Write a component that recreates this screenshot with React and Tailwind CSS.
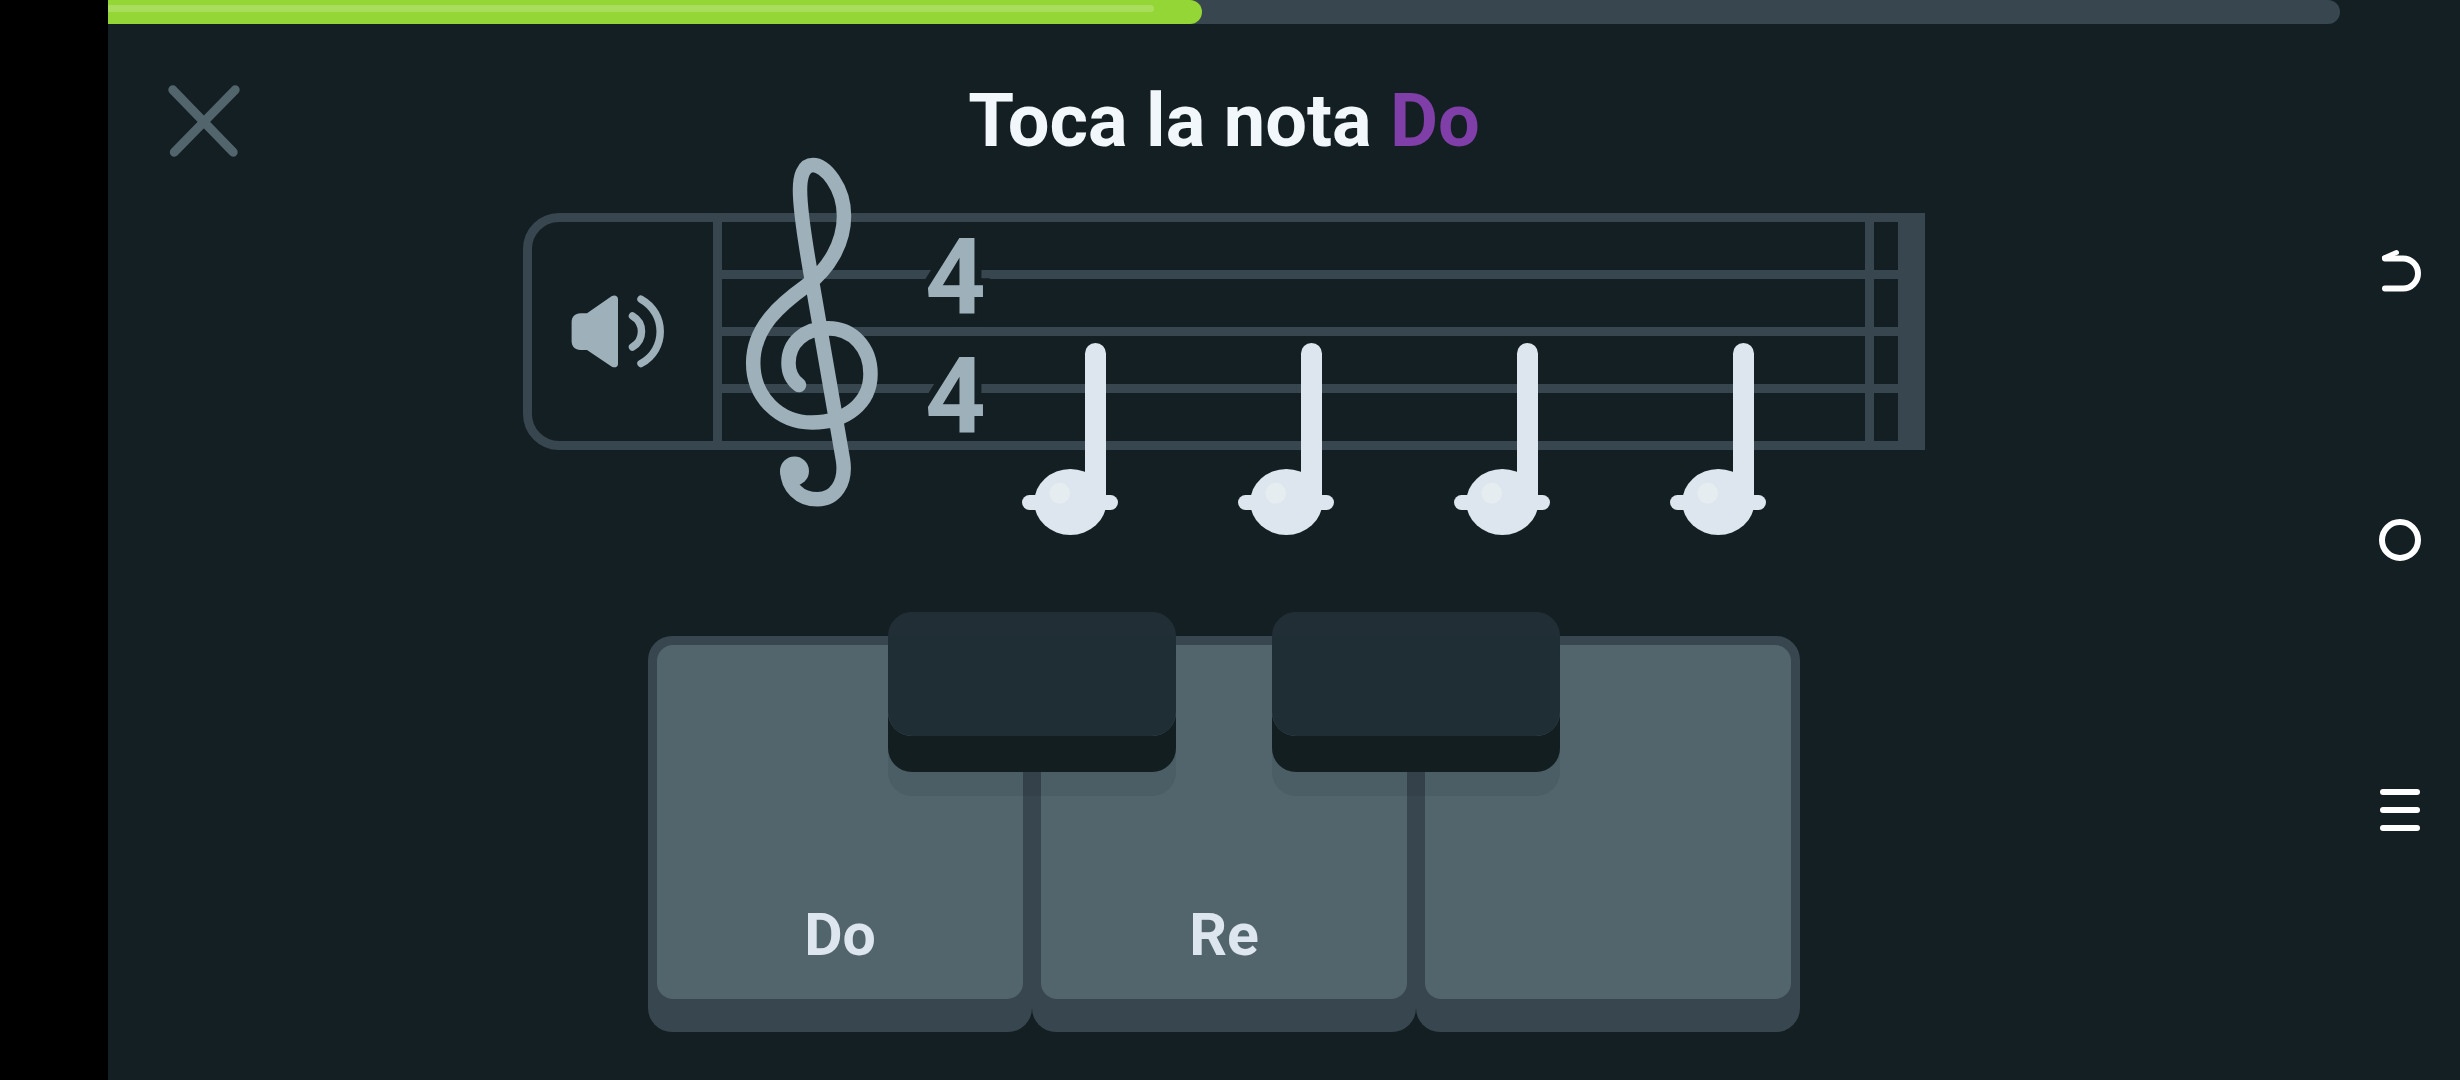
import React, { useState } from 'react';

const progress = 49;
const notes = ['Do', 'Do', 'Do', 'Do'];
const keys = [
  { note: 'Do', label: 'Do' },
  { note: 'Re', label: 'Re' },
  { note: 'Mi', label: '' },
];
const blackKeys = ['Do sostenido', 'Re sostenido'];

const CloseIcon = () => (
  <svg viewBox="0 0 72 72" className="size-[72px]" fill="none" stroke="currentColor" strokeWidth="9" strokeLinecap="round">
    <path d="M4.8 4.8 L65.2 67.2 M67.2 4.8 L6.3 67.2" />
  </svg>
);

const SpeakerIcon = () => (
  <svg viewBox="0 0 94 73" className="w-[94px] h-[73px]" fill="currentColor">
    <path d="M9.5 18.3 H16 L40.5 1.3 C43.5 -0.3 47 0.8 47 4 V69 C47 72.2 43.5 73.3 40.5 71.5 L16 55 H9.5 C4 55 0.6 51.5 0.6 46 V27.3 C0.6 21.8 4 18.3 9.5 18.3 Z" />
    <path
      d="M61.5 21 C67.5 24.5 70.5 30.5 70.5 36.5 C70.5 42.5 67.5 48.5 61.5 52 M70 4.2 C83 11.5 89.2 24 89.2 36.5 C89.2 49 83 61.5 70 68.5"
      fill="none"
      stroke="currentColor"
      strokeWidth="7.5"
      strokeLinecap="round"
    />
  </svg>
);

const TrebleClef = () => (
  <svg viewBox="0 0 134 350" className="shrink-0 w-[134px] h-[350px] text-[#9eb0ba]" fill="none">
    <path
      d="M54 228 C47 223 43.5 215 43.5 206 C43.5 186 59 171.3 83 171.3 C108 171.3 125.5 191 125.5 217 C125.5 246 101 265.5 67 265.5 C34 265.5 8.2 240 8.2 206 C8.2 170 36 147 61 129 C84 112 99 86 99 59 C99 30 80 8 68 8 C58 8 55 20 55 33 C55 60 64 106 68 130 L98 303 C101.5 326 90 342.3 72.5 342.3 C54 342.3 42.5 329 42.5 314"
      stroke="currentColor"
      strokeWidth="14.5"
      strokeLinecap="round"
    />
    <circle cx="49.5" cy="314" r="14.5" fill="currentColor" />
  </svg>
);

const QuarterNote = () => (
  <svg viewBox="0 0 96 192" className="shrink-0 w-24 h-48 text-[#dde6ee]" fill="currentColor">
    <path d="M63 155 V10.5 A10.5 10.5 0 0 1 84 10.5 V155 Z" />
    <rect x="0" y="152" width="96" height="15" rx="7.5" />
    <ellipse cx="48.3" cy="159" rx="36" ry="33" />
    <circle cx="37.7" cy="150.3" r="10.5" fill="#e5edf0" />
  </svg>
);

const BackIcon = () => (
  <svg viewBox="0 0 42 44" className="w-[42px] h-11" fill="none" stroke="currentColor" strokeWidth="6" strokeLinecap="round">
    <path d="M6 10.5 H24 A15 15 0 0 1 24 40.5 H6" />
    <path d="M5.5 9.8 L17.5 4.5" strokeWidth="5" />
  </svg>
);

const HomeIcon = () => (
  <svg viewBox="0 0 42 42" className="size-[42px]" fill="none" stroke="currentColor" strokeWidth="6">
    <circle cx="21" cy="21" r="18" />
  </svg>
);

const MenuIcon = () => (
  <svg viewBox="0 0 42 42" className="size-[42px]" stroke="currentColor" strokeWidth="6" strokeLinecap="round">
    <path d="M4 3 H38 M4 21 H38 M4 39 H38" />
  </svg>
);

const ProgressBar = ({ value }) => (
  <div className="h-6 rounded-r-full bg-[#38464f]" role="progressbar" aria-valuenow={value} aria-valuemin={0} aria-valuemax={100}>
    <div className="h-full pt-[5px] pr-12 rounded-r-full bg-[#93d635]" style={{ width: `${value}%` }}>
      <div className="h-[7px] rounded-r-full bg-[#a9de5c]" />
    </div>
  </div>
);

const Staff = () => (
  <section className="flex w-full max-w-[1402px] h-[237px]">
    <button aria-label="Escuchar" className="flex items-center justify-center w-[199px] shrink-0 pr-[10px] border-9 border-[#38464f] rounded-l-[36px] text-[#9eb0ba]">
      <SpeakerIcon />
    </button>
    <div className="grid flex-1">
      <div className="[grid-area:1/1] flex flex-col justify-between">
        {[0, 1, 2, 3, 4].map((line) => (
          <div key={line} className="h-[9px] bg-[#38464f]" />
        ))}
      </div>
      <div className="[grid-area:1/1] z-10 flex items-center h-[237px] pl-[23px]">
        <TrebleClef />
        {/* the outline in the page colour cuts the staff lines around the digits */}
        <div className="ml-[46px] pt-[10px] w-[60px] text-center text-[106px] leading-[119px] font-bold text-[#9eb0ba] [-webkit-text-stroke:14px_#141f23] [paint-order:stroke_fill]">
          <div>4</div>
          <div>4</div>
        </div>
        <div className="flex gap-[120px] self-start ml-[37px] mt-[130px]">
          {notes.map((note, index) => (
            <QuarterNote key={index} />
          ))}
        </div>
        <div className="flex gap-6 self-stretch ml-auto">
          <div className="w-[9px] bg-[#38464f]" />
          <div className="w-[27px] bg-[#38464f]" />
        </div>
      </div>
    </div>
  </section>
);

const Piano = ({ onPlay }) => (
  <section className="relative flex w-full max-w-[1152px] h-[396px]">
    {keys.map((key) => (
      <button
        key={key.note}
        aria-label={key.note}
        onClick={() => onPlay(key.note)}
        className="flex flex-1 px-[9px] pt-[9px] pb-[33px] rounded-3xl bg-[#38464f]"
      >
        <span className="flex flex-1 items-end justify-center self-stretch pb-7 rounded-2xl bg-[#52656d] text-[59px] leading-[72px] font-bold text-[#dde6ee]">
          {key.label}
        </span>
      </button>
    ))}
    <div className="absolute inset-x-0 -top-6 flex justify-center gap-24">
      {blackKeys.map((name) => (
        <button
          key={name}
          aria-label={name}
          onClick={() => onPlay(name)}
          className="w-1/4 h-[124px] rounded-3xl bg-[linear-gradient(#212e35_24px,#1f2d34_24px)] shadow-[0_36px_0_#121e20,0_60px_0_rgba(19,31,36,0.1)]"
        />
      ))}
    </div>
  </section>
);

const App = () => {
  const [, setPlayed] = useState([]);

  const handlePlay = (note) => {
    setPlayed(prev => [...prev, note]);
  };

  return (
    <div className="flex min-h-screen bg-[#141f23] font-['Roboto',sans-serif]">
      <div className="w-27 shrink-0 bg-black" />
      <main className="flex-1">
        <ProgressBar value={progress} />
        <header className="grid grid-cols-[72px_1fr_72px] items-center px-15 mt-[49px]">
          <button aria-label="Cerrar" className="text-[#52656d]">
            <CloseIcon />
          </button>
          <h1 className="text-center text-[74px] leading-[96px] font-bold text-[#f1f7fb]">
            Toca la nota <span className="text-[#803ea8]">Do</span>
          </h1>
        </header>
        <div className="flex flex-col items-center gap-[186px] mt-11 pb-12">
          <Staff />
          <Piano onPlay={handlePlay} />
        </div>
      </main>
      <nav className="flex flex-col w-30 shrink-0 py-[135px] text-white">
        <button aria-label="Atrás" className="flex flex-1 items-center justify-center"><BackIcon /></button>
        <button aria-label="Inicio" className="flex flex-1 items-center justify-center"><HomeIcon /></button>
        <button aria-label="Recientes" className="flex flex-1 items-center justify-center"><MenuIcon /></button>
      </nav>
    </div>
  );
};

export default App;
